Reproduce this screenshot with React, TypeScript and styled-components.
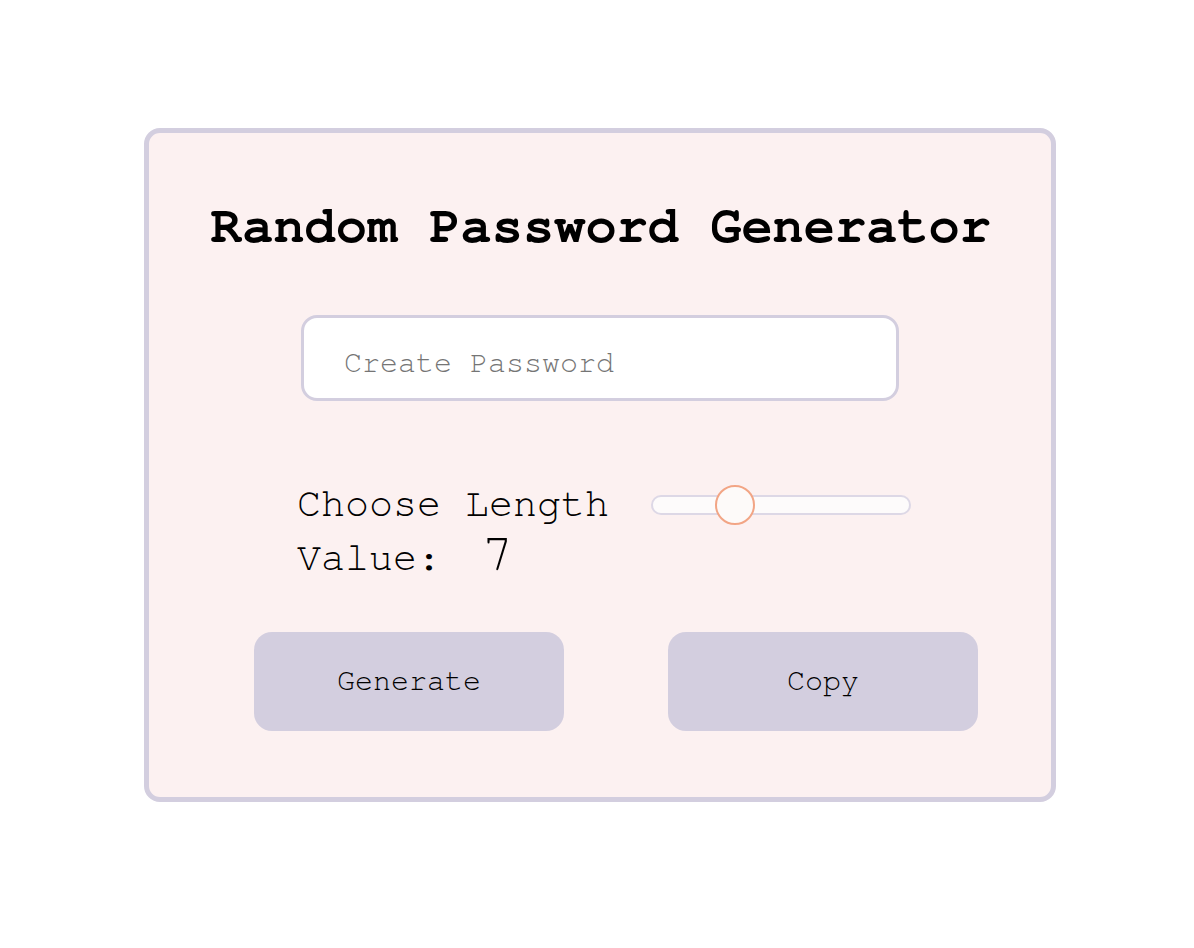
import React, { useState } from "react";
import styled, { createGlobalStyle } from "styled-components";

const MONO = `"Nimbus Mono PS", "Nimbus Mono L", "FreeMono", "Courier 10 Pitch", "Courier", "Liberation Mono", monospace`;

const Global = createGlobalStyle`
  html, body { margin: 0; padding: 0; background: #ffffff; }
  body { font-family: ${MONO}; }
  * { box-sizing: border-box; }
`;

const Page = styled.div`
  padding-top: 128px;
  padding-left: 144px;
`;

const Card = styled.div`
  width: 912px;
  border: 5px solid #d3cedf;
  border-radius: 16px;
  background: #fcf1f1;
  padding: 64px 0 66px 0;
  display: flex;
  flex-direction: column;
`;

const Title = styled.h1`
  margin: 0;
  padding-left: 2px;
  font-family: ${MONO};
  font-weight: 700;
  font-size: 52px;
  line-height: 59px;
  text-align: center;
  color: #000;
`;

const PasswordInput = styled.input`
  align-self: center;
  margin-top: 59px;
  width: 598px;
  height: 86px;
  border: 3px solid #d3cedf;
  border-radius: 16px;
  background: #ffffff;
  padding: 10px 38px 0 40px;
  font-family: ${MONO};
  font-size: 30px;
  color: #000;
  outline: none;
  &::placeholder { color: #757575; }
`;

const LengthRow = styled.div`
  margin-top: 81px;
  padding-left: 148px;
  display: flex;
  align-items: center;
  gap: 42px;
`;

const Label = styled.span`
  font-size: 40px;
  line-height: 45px;
  color: #000;
`;

const Range = styled.input`
  -webkit-appearance: none;
  appearance: none;
  margin: 0;
  width: 260px;
  height: 20px;
  border: 2px solid #ddd8e6;
  border-radius: 10px;
  background: #fdfbfb;
  outline: none;
  &::-webkit-slider-thumb {
    -webkit-appearance: none;
    appearance: none;
    width: 40px;
    height: 40px;
    border-radius: 50%;
    border: 2px solid #f2a585;
    background: #fdfaf9;
    cursor: pointer;
  }
`;

const ValueRow = styled.div`
  margin-top: -1px;
  padding-left: 148px;
  display: flex;
  align-items: baseline;
`;

const ValueNum = styled.span`
  margin-left: 41px;
  font-size: 52px;
  line-height: 56px;
  color: #000;
`;

const ButtonRow = styled.div`
  margin-top: 50px;
  padding-left: 105px;
  display: flex;
  gap: 104px;
`;

const ActionButton = styled.button`
  width: 310px;
  height: 99px;
  border: none;
  border-radius: 18px;
  background: #d3cedf;
  padding: 0 0 2px 0;
  font-family: ${MONO};
  font-size: 30px;
  color: #000;
  cursor: pointer;
`;

export default function App() {
  const [len, setLen] = useState(7);
  return (
    <>
      <Global />
      <Page>
        <Card>
          <Title>Random Password Generator</Title>
          <PasswordInput placeholder="Create Password" readOnly />
          <LengthRow>
            <Label>Choose Length</Label>
            <Range
              type="range"
              min={1}
              max={22}
              value={len}
              onChange={(e) => setLen(Number(e.target.value))}
            />
          </LengthRow>
          <ValueRow>
            <Label>Value:</Label>
            <ValueNum>{len}</ValueNum>
          </ValueRow>
          <ButtonRow>
            <ActionButton>Generate</ActionButton>
            <ActionButton>Copy</ActionButton>
          </ButtonRow>
        </Card>
      </Page>
    </>
  );
}
